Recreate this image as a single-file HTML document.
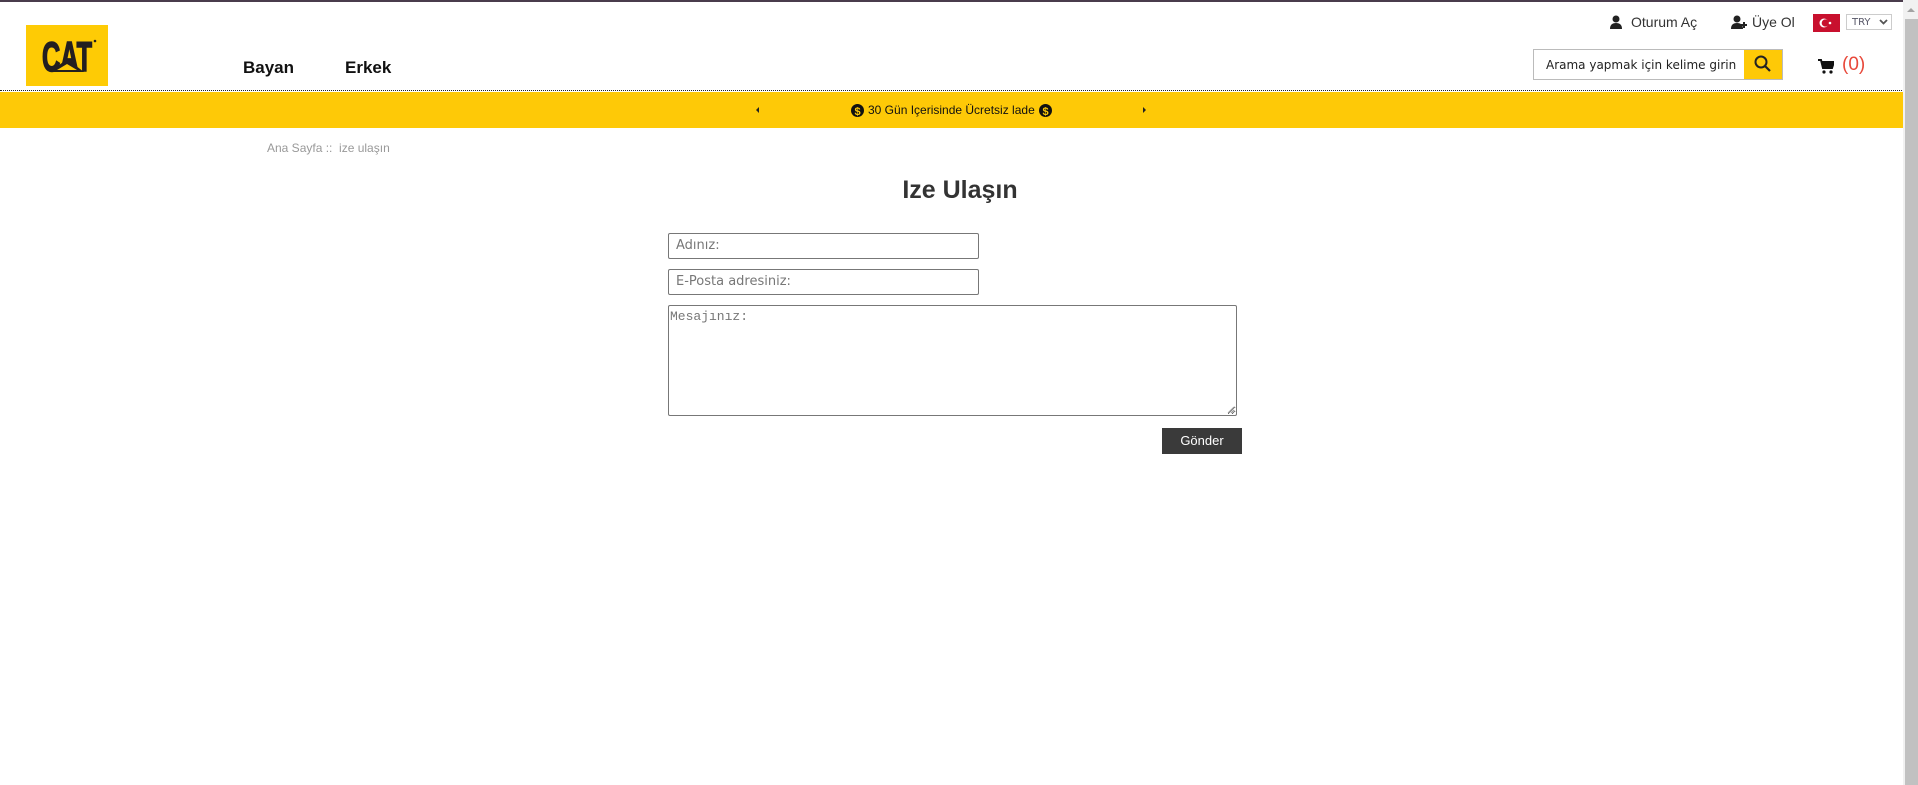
<!DOCTYPE html>
<html><head><meta charset="utf-8">
<style>
*{box-sizing:border-box;margin:0;padding:0}
html,body{width:1918px;height:785px;overflow:hidden;background:#fff;font-family:"Liberation Sans",Arial,sans-serif;position:relative}
.abs{position:absolute}
.topbar{left:0;top:0;width:1904px;height:2px;background:#4a3c4c}
.logo{left:26px;top:25px;width:82px;height:61px;background:#fecb05}
.nav{top:58px;font-size:17px;font-weight:bold;color:#111}
.dots{left:0;top:90px;width:1904px;border-top:1px dotted #222}
.band{left:0;top:92px;width:1904px;height:36px;background:#fec907}
.tx{font-family:"DejaVu Sans",sans-serif;color:#333}
input,textarea{position:absolute;border:1px solid #777;border-radius:2px;background:#fff}
.ph{position:absolute;color:#777;font-size:13px}
.sb{left:1903px;top:0;width:15px;height:785px;background:#f1f1f1}
.thumb{left:1905px;top:19px;width:13px;height:766px;background:#c1c1c1}
</style></head><body>
<div class="abs topbar"></div>
<div class="abs logo">
<svg width="82" height="61" viewBox="0 0 82 61">
<text x="16" y="46" font-family="Liberation Sans" style="font-weight:bold" font-size="42" fill="#231f20" stroke="#231f20" stroke-width="1.6" textLength="50" lengthAdjust="spacingAndGlyphs">CAT</text>
<polygon points="41,34 58,47 24,47" fill="#231f20"/>
<polygon points="41,39 51,45 31,45" fill="#fecb05"/>
<circle cx="69" cy="16" r="1.3" fill="#231f20"/>
</svg>
</div>
<div class="abs nav" style="left:243px">Bayan</div>
<div class="abs nav" style="left:345px">Erkek</div>

<svg class="abs" style="left:1610px;top:15px" width="12" height="14" viewBox="0 0 12 14"><circle cx="6" cy="4" r="3.5" fill="#222"/><path d="M0 14 Q0 8 6 8 Q12 8 12 14Z" fill="#222"/></svg>
<div class="abs" style="left:1631px;top:14px;font-size:14px;color:#333">Oturum Aç</div>
<svg class="abs" style="left:1731px;top:15px" width="17" height="14" viewBox="0 0 17 14"><circle cx="6" cy="4" r="3.5" fill="#222"/><path d="M0 14 Q0 8 6 8 Q12 8 12 14Z" fill="#222"/><path d="M13 7v6M10 10h6" stroke="#222" stroke-width="2"/></svg>
<div class="abs" style="left:1752px;top:14px;font-size:14px;color:#333">Üye Ol</div>
<div class="abs" style="left:1813px;top:14px;width:27px;height:18px;background:#c8102e">
<svg width="27" height="18"><circle cx="11" cy="9" r="4.5" fill="#fff"/><circle cx="12.3" cy="9" r="3.6" fill="#c8102e"/><circle cx="17" cy="9" r="1.3" fill="#fff"/></svg></div>
<div class="abs" style="left:1846px;top:14px;width:46px;height:16px;border:1px solid #ccc;font-size:10px;color:#556;padding:2px 0 0 5px;font-family:'DejaVu Sans',sans-serif">TRY
<svg class="abs" style="left:32px;top:4px" width="9" height="6"><path d="M1 1l3.5 3.5L8 1" stroke="#555" stroke-width="1.8" fill="none"/></svg></div>

<div class="abs" style="left:1533px;top:49px;width:250px;height:31px;border:1px solid #bbb"></div>
<div class="abs tx" style="left:1546px;top:58px;font-size:12px;color:#222;white-space:nowrap">Arama yapmak için kelime girin</div>
<div class="abs" style="left:1744px;top:50px;width:38px;height:29px;background:#fec907">
<svg width="38" height="29"><circle cx="17" cy="12" r="5.5" stroke="#222" stroke-width="2" fill="none"/><path d="M21 16l5 5" stroke="#222" stroke-width="2.2"/></svg></div>
<svg class="abs" style="left:1818px;top:59px" width="16" height="15" viewBox="0 0 16 15"><path d="M0 1h3l2 8h9l2-6H4" stroke="#111" stroke-width="2" fill="none"/><path d="M4 3h12l-2 6H5z" fill="#111"/><circle cx="6" cy="13" r="1.6" fill="#111"/><circle cx="13" cy="13" r="1.6" fill="#111"/></svg>
<div class="abs" style="left:1842px;top:54px;font-size:19px;color:#e8483a">(0)</div>

<div class="abs dots"></div>
<div class="abs band"></div>
<svg class="abs" style="left:756px;top:107px" width="4" height="6"><path d="M3 0v6L0 3z" fill="#222"/></svg>
<svg class="abs" style="left:1143px;top:107px" width="4" height="6"><path d="M0 0v6l3-3z" fill="#222"/></svg>
<div class="abs" style="left:851px;top:102px;height:16px;font-size:12px;color:#111;white-space:nowrap;display:flex;align-items:center;gap:4px">
<svg width="13" height="13"><circle cx="6.5" cy="6.5" r="6.5" fill="#111"/><text x="6.5" y="11" text-anchor="middle" font-size="11" font-weight="bold" fill="#fec907" font-family="Liberation Sans">$</text></svg>
<span>30 Gün Içerisinde Ücretsiz lade</span>
<svg width="13" height="13"><circle cx="6.5" cy="6.5" r="6.5" fill="#111"/><text x="6.5" y="11" text-anchor="middle" font-size="11" font-weight="bold" fill="#fec907" font-family="Liberation Sans">$</text></svg>
</div>

<div class="abs" style="left:267px;top:141px;font-size:12px;color:#999">Ana Sayfa ::&nbsp; ize ulaşın</div>
<div class="abs" style="left:860px;width:200px;top:176px;text-align:center;font-size:25px;font-weight:bold;color:#333">Ize Ulaşın</div>

<input style="left:668px;top:233px;width:311px;height:26px">
<div class="ph tx" style="left:676px;top:238px;color:#777">Adınız:</div>
<input style="left:668px;top:269px;width:311px;height:26px">
<div class="ph tx" style="left:676px;top:274px;color:#777">E-Posta adresiniz:</div>
<textarea style="left:668px;top:305px;width:569px;height:111px"></textarea>
<div class="ph" style="left:670px;top:309px;font-family:'Liberation Mono',monospace;color:#777;font-size:13px">Mesajınız:</div>
<svg class="abs" style="left:1227px;top:406px" width="8" height="8"><path d="M7 1L1 7M7 4L4 7" stroke="#999" stroke-width="1"/></svg>
<div class="abs" style="left:1162px;top:428px;width:80px;height:26px;background:#3a3a3a;color:#fff;font-size:13px;text-align:center;line-height:26px">Gönder</div>

<div class="abs sb"></div>
<div class="abs thumb"></div>
<svg class="abs" style="left:1906px;top:7px" width="10" height="6"><path d="M1 5L5 1l4 4z" fill="#a3a3a3"/></svg>
</body></html>
